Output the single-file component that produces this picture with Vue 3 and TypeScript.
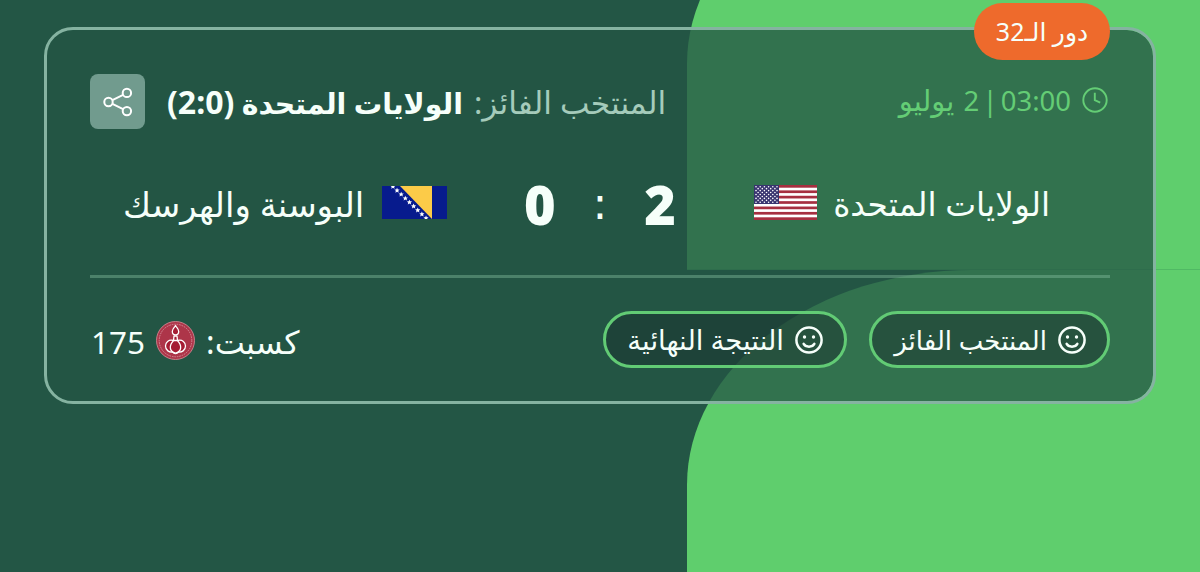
<script setup lang="ts">
interface Prediction {
  id: string;
  label: string;
}

const stage = "دور الـ32";
const hour = "03:00";
const day = 2;
const month = "يوليو";
const points = 175;

const predictions: Prediction[] = [
  { id: "winner", label: "المنتخب الفائز" },
  { id: "score", label: "النتيجة النهائية" },
];

// small stars on the flag diagonal
const bosniaStars = Array.from({ length: 9 }, (_, i) => ({ x: 10.9 + i * 4.14, y: 0.4 + i * 3.96 }));

// alternating 6/5 star rows in the canton
const usaStars = Array.from({ length: 9 }, (_, row) =>
  Array.from({ length: row % 2 ? 5 : 6 }, (_, col) => ({
    x: 2 + col * 4.2 + (row % 2 ? 2.1 : 0),
    y: 1.7 + row * 1.95,
  })),
).flat();
</script>

<template>
  <main class="page" dir="rtl">
    <div class="backdrop">
      <div class="blob blob-top"></div>
      <div class="blob blob-bottom"></div>
    </div>

    <article class="card">
      <span class="badge">{{ stage }}</span>

      <header class="card-head">
        <div class="kickoff">
          <svg class="clock" viewBox="0 0 26 26" fill="none" stroke="currentColor" stroke-width="1.9">
            <circle cx="13" cy="13" r="11.7" />
            <path d="M12.8 5.8v7.4l5.4 2.5" />
          </svg>
          <span class="kickoff-text">{{ hour }} | {{ day }} <span class="month">{{ month }}</span></span>
        </div>
        <div class="result">
          <p class="winner">
            <span class="winner-label">المنتخب الفائز:</span>
            <strong class="winner-name">الولايات المتحدة <span class="winner-score">(2:0)</span></strong>
          </p>
          <button class="share" type="button">
            <svg viewBox="0 0 30 30" fill="none" stroke="currentColor" stroke-width="2">
              <circle cx="5.5" cy="15" r="4.2" />
              <circle cx="23.9" cy="5.9" r="4.2" />
              <circle cx="23.9" cy="24.1" r="4.2" />
              <path d="M9.4 13.1l10.7-5.3M9.4 16.9l10.7 5.3" />
            </svg>
          </button>
        </div>
      </header>

      <section class="match">
        <div class="team team-home">
          <span class="team-name">الولايات المتحدة</span>
          <svg class="flag flag-usa" viewBox="0 0 63 35" preserveAspectRatio="none">
            <rect width="63" height="35" fill="#fff" />
            <rect v-for="n in 7" :key="n" width="63" height="2.7" :transform="`translate(0 ${(n - 1) * 5.385})`" fill="#a62f40" />
            <rect width="25" height="19" fill="#38346f" />
            <circle v-for="(s, i) in usaStars" :key="i" :cx="s.x" :cy="s.y" r="0.8" fill="#fff" />
          </svg>
        </div>

        <div class="score">
          <b class="goals">2</b>
          <span class="colon">:</span>
          <b class="goals">0</b>
        </div>

        <div class="team team-away">
          <svg class="flag flag-bosnia" viewBox="0 0 65 33" preserveAspectRatio="none">
            <rect width="65" height="33" fill="#071b8d" />
            <path d="M18 0H50V33Z" fill="#fccb48" />
            <path
              v-for="(s, i) in bosniaStars"
              :key="i"
              :transform="`translate(${s.x} ${s.y})`"
              d="M0-2.6L.8-.9 2.6-.8 1.2.5 1.7 2.3 0 1.3-1.7 2.3-1.2.5-2.6-.8-.8-.9Z"
              fill="#fff"
            />
          </svg>
          <span class="team-name">البوسنة والهرسك</span>
        </div>
      </section>

      <footer class="card-foot">
        <ul class="predictions">
          <li v-for="p in predictions" :key="p.id" class="pill" :class="`pill-${p.id}`">
            <svg class="smile" viewBox="0 0 28 28" fill="none" stroke="currentColor" stroke-width="2.5">
              <circle cx="14" cy="14" r="12.6" />
              <path d="M8.6 17.8c1.7 3.8 9.1 3.8 10.8 0" stroke-linecap="round" />
              <circle cx="9.5" cy="11" r="1.7" fill="currentColor" stroke="none" />
              <circle cx="18.5" cy="11" r="1.7" fill="currentColor" stroke="none" />
            </svg>
            <span class="pill-label">{{ p.label }}</span>
          </li>
        </ul>
        <div class="earned">
          <span class="earned-label">كسبت:</span>
          <svg class="coin" viewBox="0 0 39 39">
            <circle cx="19.5" cy="19.5" r="19" fill="#ad3549" stroke="#cf8590" stroke-width="0.9" />
            <circle cx="19.5" cy="19.5" r="16.3" fill="none" stroke="#d48c97" stroke-width="1" stroke-dasharray="1.6 0.9" />
            <g fill="#a51c33" stroke="#fff" stroke-width="1.3" stroke-linejoin="round">
              <path d="M18 15h3l.5 4.5c5-1.2 8 1.8 8 5.500 0 4.500-4 6.500-7 6-1.800 2-4.200 2-6 0-3 .5-7-1.500-7-6 0-3.700 3-6.700 8-5.500Z" />
              <path d="M17.700 19.500c-5 5-4.500 11 1.800 12.700 6.300-1.700 6.800-7.700 1.800-12.700Z" />
              <path d="M19.500 4.500c-1 2.200-3.200 3.500-3.200 6 0 2 1.400 3.400 3.200 3.400s3.200-1.400 3.200-3.400c0-2.500-2.200-3.800-3.200-6Z" />
            </g>
          </svg>
          <span class="points">{{ points }}</span>
        </div>
      </footer>
    </article>
  </main>
</template>

<style>
body {
  margin: 0;
}
</style>

<style scoped>
.page {
  position: relative;
  box-sizing: border-box;
  height: 572px;
  padding: 27px 44px 0;
  overflow: hidden;
  background: #235645;
  color: #f6fffa;
  font-family: "Noto Sans", "DejaVu Sans", sans-serif;
}

.backdrop {
  position: absolute;
  inset: 0;
}

.blob {
  position: absolute;
  left: 687px;
  right: 0;
  height: 420px;
  background: #5fce6d;
  border-top-left-radius: 285px 215px;
}

.blob-top {
  top: -151px;
  border-bottom: 1px solid #50b964;
}

.blob-bottom {
  top: 270px;
}

.card {
  position: relative;
  box-sizing: border-box;
  height: 377px;
  padding: 44px 43px 0;
  border: 3px solid #85b3a1;
  border-radius: 29px;
  background: rgba(35, 86, 69, 0.76);
  background-clip: padding-box;
}

.badge {
  position: absolute;
  top: -27px;
  right: 43px;
  width: 136px;
  height: 57px;
  border-radius: 29px;
  background: #ee6a2c;
  font-size: 25px;
  line-height: 57px;
  text-align: center;
  white-space: nowrap;
}

.card-head {
  display: flex;
  align-items: center;
  justify-content: space-between;
  height: 55px;
}

.kickoff,
.result {
  display: flex;
  align-items: center;
}

.kickoff {
  gap: 11px;
  padding: 0 2px 3px 0;
  color: #64cd75;
  font-size: 27.5px;
  line-height: 40px;
  white-space: nowrap;
  word-spacing: -4px;
}

.month {
  margin-right: 6px;
  font-size: 29px;
}

.clock {
  width: 26px;
  height: 26px;
}

.result {
  gap: 22px;
}

.winner {
  display: flex;
  align-items: baseline;
  gap: 11px;
  margin: 0;
  padding-top: 2px;
  line-height: 48px;
  white-space: nowrap;
}

.winner-label {
  color: #a5cbbb;
  font-size: 31.3px;
}

.winner-name {
  font-size: 28.4px;
}

.winner-score {
  font-size: 32px;
  line-height: 1;
}

.share {
  display: grid;
  place-items: center;
  width: 55px;
  height: 55px;
  padding: 0;
  border: 0;
  border-radius: 8px;
  background: #719b8e;
  color: #fff;
}

.share svg {
  width: 30px;
  height: 30px;
}

.match {
  display: flex;
  align-items: center;
  height: 146px;
  border-bottom: 3px solid rgba(133, 190, 160, 0.42);
}

.team {
  display: flex;
  flex: 0 0 434px;
  box-sizing: border-box;
  align-items: center;
  line-height: 48px;
  white-space: nowrap;
}

.team-home {
  gap: 16px;
  padding-right: 60px;
  font-size: 32.8px;
}

.team-away {
  justify-content: flex-end;
  gap: 18px;
  padding-left: 33px;
  font-size: 34px;
}

.team-name {
  padding-top: 3px;
}

.flag {
  flex: none;
}

.flag-usa {
  width: 63px;
  height: 35px;
}

.flag-bosnia {
  width: 65px;
  height: 33px;
}

.score {
  display: flex;
  flex: none;
  align-items: center;
  justify-content: space-between;
  width: 152px;
  padding-top: 3px;
  font-size: 54px;
}

.goals {
  font-weight: 900;
}

.colon {
  font-family: "DejaVu Sans", sans-serif;
  font-size: 44px;
}

.card-foot {
  display: flex;
  align-items: center;
  justify-content: space-between;
  height: 123px;
}

.predictions {
  display: flex;
  gap: 22px;
  margin: 0;
  padding: 0;
  list-style: none;
}

.pill {
  display: flex;
  box-sizing: border-box;
  align-items: center;
  gap: 11px;
  height: 57px;
  padding-right: 21px;
  border: 3px solid #62cb75;
  border-radius: 29px;
  background: rgba(25, 50, 45, 0.5);
  line-height: 40px;
  white-space: nowrap;
}

.pill-winner {
  width: 241px;
  font-size: 26px;
}

.pill-score {
  width: 244px;
  font-size: 27.5px;
}

.smile {
  flex: none;
  width: 28px;
  height: 28px;
}

.earned {
  display: flex;
  align-items: center;
  gap: 11px;
  padding: 2px 0 0 1px;
  font-size: 32px;
  line-height: 44px;
}

.earned-label,
.points {
  padding-top: 2px;
}

.coin {
  width: 39px;
  height: 39px;
}

.points {
  font-size: 31.5px;
}
</style>
